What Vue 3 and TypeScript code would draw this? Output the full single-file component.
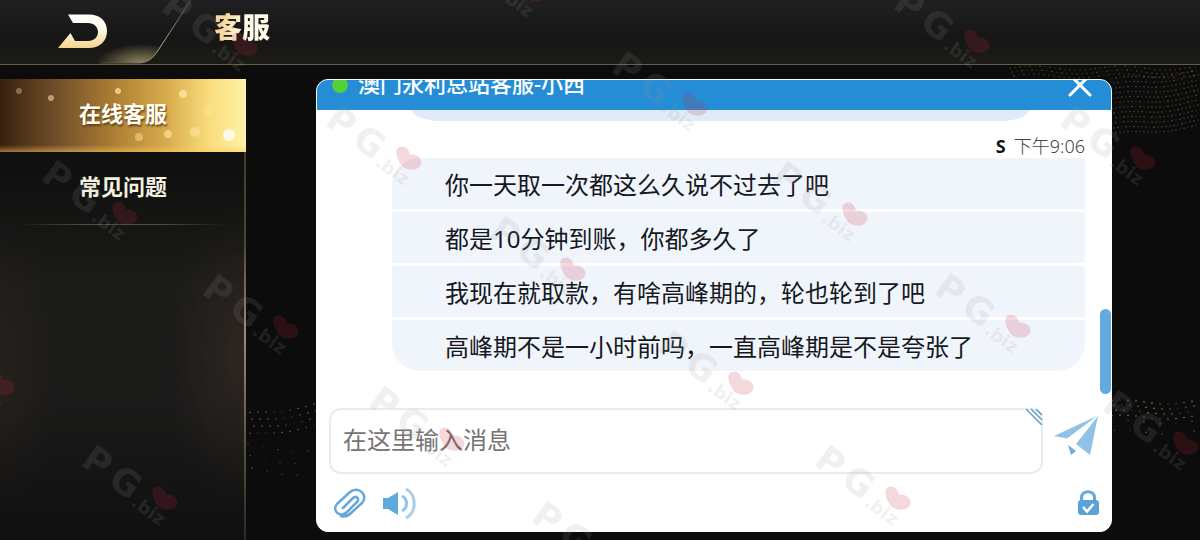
<script setup lang="ts">
import { ref } from 'vue'

interface Point { x: number; y: number }
interface Dot extends Point { r: number; o: number; warm: boolean }

const tabs = ['在线客服', '常见问题']
const active = ref(0)
const draft = ref('')

const messages = [
  '你一天取一次都这么久说不过去了吧',
  '都是10分钟到账，你都多久了',
  '我现在就取款，有啥高峰期的，轮也轮到了吧',
  '高峰期不是一小时前吗，一直高峰期是不是夸张了',
]

const marks: Point[] = [
  { x: 177, y: 8 }, { x: 465, y: -46 }, { x: 627, y: 68 }, { x: 909, y: 5 },
  { x: 57, y: 177 }, { x: 341, y: 122 }, { x: 1075, y: 122 }, { x: 787, y: 178 },
  { x: 218, y: 291 }, { x: 505, y: 233 }, { x: 950, y: 290 }, { x: 673, y: 347 },
  { x: -66, y: 347 }, { x: 97, y: 462 }, { x: 384, y: 403 }, { x: 1118, y: 407 },
  { x: 830, y: 462 }, { x: 547, y: 518 },
]

const sparkles: Dot[] = [
  { x: 19, y: 12, r: 3, o: 0.35, warm: true }, { x: 51, y: 19, r: 3, o: 0.55, warm: true },
  { x: 118, y: 12, r: 3, o: 0.7, warm: true }, { x: 183, y: 15, r: 4, o: 0.75, warm: true },
  { x: 208, y: 31, r: 5, o: 0.35, warm: true }, { x: 139, y: 58, r: 4, o: 0.45, warm: true },
  { x: 168, y: 55, r: 4, o: 0.6, warm: true }, { x: 195, y: 53, r: 5, o: 0.5, warm: true },
  { x: 229, y: 56, r: 6, o: 0.75, warm: false },
]

function wave(x0: number, x1: number, y0: number, rows: number, gap: number, step: number, slope: number, strength: number): Dot[] {
  const out: Dot[] = []
  for (let r = 0; r < rows; r++) {
    for (let x = x0 + (r % 3) * 2; x < x1; x += step) {
      const n = Math.abs(Math.sin(x * 12.9 + r * 78.2))
      out.push({ x, y: y0 + r * gap + (x - x0) * slope + Math.sin(x / 14) * 2, r: 0.8, o: strength * (0.3 + n * 0.7), warm: n > 0.6 })
    }
  }
  return out
}

const dust: Dot[] = [
  ...wave(1010, 1200, 68, 3, 4, 5, 0, 0.4),
  ...wave(1112, 1200, 80, 12, 5, 4, -0.1, 0.45),
  ...wave(250, 320, 414, 4, 7, 8, -0.14, 0.6),
  ...wave(248, 310, 445, 3, 12, 15, 0.1, 0.4),
  ...wave(1112, 1196, 402, 4, 5, 8, 0, 0.8),
  ...wave(1112, 1196, 422, 2, 10, 16, 0, 0.5),
]
</script>

<template>
  <div class="page">
    <svg class="dust" width="1200" height="540" viewBox="0 0 1200 540" aria-hidden="true">
      <circle v-for="(d, i) in dust" :key="i" :cx="d.x" :cy="d.y" :r="d.r" :opacity="d.o" :fill="d.warm ? '#c9a050' : '#a09a88'" />
    </svg>

    <header class="topbar">
      <button class="back" type="button" aria-label="返回">
        <svg width="200" height="64" viewBox="0 0 200 64">
          <defs>
            <linearGradient id="arrowFill" x1="0" y1="0" x2="0" y2="1">
              <stop offset="0" stop-color="#ffffff" />
              <stop offset="0.45" stop-color="#fff9e8" />
              <stop offset="1" stop-color="#f4d38a" />
            </linearGradient>
            <radialGradient id="tabGlow" cx="0.5" cy="0.5" r="0.5">
              <stop offset="0" stop-color="#b3a574" stop-opacity="0.8" />
              <stop offset="1" stop-color="#b3a574" stop-opacity="0" />
            </radialGradient>
            <linearGradient id="tabEdge" x1="0" y1="1" x2="1" y2="0">
              <stop offset="0" stop-color="#4b4838" />
              <stop offset="0.5" stop-color="#b5ab8a" />
              <stop offset="1" stop-color="#454238" />
            </linearGradient>
            <clipPath id="tabClip"><path d="M0 0H191L157 52Q151 62 140 63H0Z" /></clipPath>
          </defs>
          <g clip-path="url(#tabClip)"><ellipse cx="142" cy="64" rx="46" ry="20" fill="url(#tabGlow)" /></g>
          <path d="M191 0L157 52Q151 62 140 63H100" fill="none" stroke="url(#tabEdge)" />
          <path d="M68 14.5H89C100 14.5 107 21 107 31S100 48 89 48H58L70.5 33L75 41H88C94 41 98 37 98 32S94 23 88 23H73Z" fill="url(#arrowFill)" />
        </svg>
      </button>
      <h1 class="title">客服</h1>
    </header>

    <div class="body">
      <nav class="sidebar">
        <button v-for="(t, i) in tabs" :key="t" type="button" class="tab" :class="{ on: i === active }" @click="active = i">
          <svg v-if="i === active" class="sparkle" width="246" height="73" viewBox="0 0 246 73" aria-hidden="true">
            <circle v-for="(d, k) in sparkles" :key="k" :cx="d.x" :cy="d.y" :r="d.r" :opacity="d.o" :fill="d.warm ? '#ffe9a8' : '#ffffff'" />
          </svg>
          <span>{{ t }}</span>
        </button>
      </nav>

      <main class="chat">
        <div class="chat-head">
          <span class="status"></span>
          <h2>澳门永利总站客服-小西</h2>
          <button class="close" type="button" aria-label="关闭">
            <svg width="26" height="26" viewBox="0 0 26 26"><path d="M3 3L23 23M23 3L3 23" fill="none" stroke="#fff" stroke-width="3" stroke-linecap="round" /></svg>
          </button>
        </div>

        <section class="log">
          <div class="previous"></div>
          <p class="meta"><b>S</b><time>下午9:06</time></p>
          <div class="bubble">
            <p v-for="m in messages" :key="m">{{ m }}</p>
          </div>
          <div class="thumb"></div>
        </section>

        <form class="composer" @submit.prevent>
          <div class="field">
            <textarea v-model="draft" rows="1" aria-label="消息" placeholder="在这里输入消息"></textarea>
            <svg class="grip" width="17" height="17" viewBox="0 0 17 17" aria-hidden="true"><path d="M0 1L16 17M5 1L16 12M10 1L16 7" stroke="#5c9fd0" stroke-width="1.5" fill="none" /></svg>
          </div>
          <button class="send" type="submit" aria-label="发送">
            <svg width="44" height="42" viewBox="0 0 44 42">
              <path d="M43 2L0 22L13 24.5Z" fill="#8fc2e6" />
              <path d="M44 2L36 41L22 30Z" fill="#8fc2e6" />
              <path d="M14 31L22 37L17 41Z" fill="#6caedd" />
            </svg>
          </button>
        </form>

        <div class="tools">
          <button type="button" aria-label="附件">
            <svg width="34" height="32" viewBox="0 0 34 32"><path d="M10 21L20 11C23 8 27 12 24 15L14 25C8 31 -2 24 4 17L17 5C25 -2 36 8 29 16L18 26C15 29 11 30 8 29" fill="none" stroke="#66a8d9" stroke-width="2.5" stroke-linecap="round" stroke-linejoin="round" /></svg>
          </button>
          <button type="button" aria-label="声音">
            <svg width="34" height="32" viewBox="0 0 34 32">
              <path d="M1 11H6L16 5V28L6 22H1Z" fill="#5faadc" />
              <path d="M20 9C26 12 26 21 20 24" fill="none" stroke="#8fc4e8" stroke-width="3" />
              <path d="M24 2C35 8 35 25 24 31" fill="none" stroke="#a9cdea" stroke-width="3" />
            </svg>
          </button>
          <button class="lock" type="button" aria-label="安全">
            <svg width="22" height="26" viewBox="0 0 22 26">
              <path d="M4.5 11V8C4.5 -0.5 17.5 -0.5 17.5 8V11" fill="none" stroke="#66a6d8" stroke-width="3" />
              <rect x="1" y="10" width="21" height="15" rx="3" fill="#5ba2d8" />
              <path d="M6 17L10 21.5L16.5 14" fill="none" stroke="#fff" stroke-width="2.5" />
            </svg>
          </button>
        </div>
      </main>
    </div>

    <svg class="marks" width="1200" height="540" viewBox="0 0 1200 540" aria-hidden="true">
      <g v-for="(m, i) in marks" :key="i" :transform="`translate(${m.x} ${m.y}) rotate(36)`">
        <g fill="#999999" opacity="0.14">
          <text class="mark-big" x="-13" y="12">P</text>
          <text class="mark-big" x="20" y="12">G</text>
          <text class="mark-small" x="52" y="15">.biz</text>
        </g>
        <path d="M76 0C66 -3 59 -9 62 -14C65 -19 71 -18 75 -14C80 -20 91 -18 90 -10C89 -4 82 0 76 0Z" fill="#c8283c" opacity="0.18" />
      </g>
    </svg>
  </div>
</template>

<style>
html, body { background: #0c0c0c; }
</style>

<style scoped>
.page {
  position: relative;
  display: flex;
  flex-direction: column;
  min-height: 100vh;
  overflow: hidden;
  background: #0c0c0c;
  font-family: "Noto Sans", "Noto Sans CJK SC", sans-serif;
}
.page * { box-sizing: border-box; }
h1, h2, p { margin: 0; }
button { padding: 0; border: 0; background: none; font: inherit; color: inherit; cursor: pointer; }
svg { display: block; }
.dust, .marks { position: absolute; top: 0; left: 0; pointer-events: none; }
.mark-big { font: bold 36px "DejaVu Sans", sans-serif; }
.mark-small { font: bold 18px "DejaVu Sans", sans-serif; }

.topbar {
  position: relative;
  display: flex;
  height: 65px;
  border-bottom: 1px solid #625e4c;
  background: linear-gradient(#202020, #161616 60%, #1c1b16);
}
.title {
  margin-left: 14px;
  font-size: 28px;
  line-height: 54px;
  font-weight: 900;
  background: linear-gradient(100deg, #f7d9a0 15px, #fffbe8 34px, #fff8e4);
  -webkit-background-clip: text;
  background-clip: text;
  color: transparent;
}

.body { flex: 1; display: flex; padding-top: 14px; }
.sidebar {
  position: relative;
  width: 246px;
  border-right: 2px solid;
  border-image: linear-gradient(#3a3628, #4a4534 35%, #9c8c74 55%, #56523c 80%, #2a2820) 1;
  background:
    radial-gradient(ellipse 80px 150px at 100% 60%, rgba(110, 75, 60, 0.24), transparent),
    radial-gradient(ellipse 60px 150px at 0 62%, rgba(100, 65, 45, 0.16), transparent),
    linear-gradient(#101010 20%, #1b1b19 45%, #1a1a19 70%, #101010);
}
.tab {
  position: relative;
  display: block;
  width: 246px;
  height: 73px;
  padding-bottom: 4px;
  font-size: 22px;
  line-height: 69px;
  font-weight: 700;
  color: #f4f0e0;
}
.tab span { position: relative; }
.tab:not(.on)::after {
  content: "";
  position: absolute;
  left: 20px;
  right: 20px;
  bottom: 0;
  height: 1px;
  background: linear-gradient(90deg, transparent, #514d3e 30%, #514d3e 70%, transparent);
}
.tab.on {
  color: #fffdf4;
  text-shadow: 1px 2px 2px rgba(90, 50, 10, 0.8);
  background:
    linear-gradient(transparent 66px, rgba(255, 200, 90, 0.5)),
    linear-gradient(90deg, #38200f, #74502a 24%, #b08235 48%, #d8ac4e 68%, #f9dc7c 85%, #fff2a6);
}
.sparkle { position: absolute; left: 0; top: 0; }

.chat {
  position: relative;
  flex: 1;
  display: flex;
  flex-direction: column;
  margin: 0 88px 8px 70px;
  border: 1px solid #fff;
  border-radius: 12px;
  overflow: hidden;
  background: #fff;
}
.chat-head {
  display: flex;
  align-items: center;
  height: 30px;
  padding: 0 18px 0 15px;
  overflow: hidden;
  background: #258dd6;
  color: #fff;
}
.chat-head > * { flex: none; margin-bottom: 20px; }
.chat-head h2 { margin: 0 0 24px 10px; font-size: 22px; line-height: 30px; font-weight: 500; }
.status { width: 16px; height: 16px; border-radius: 50%; background: #55cf3c; }
.close { margin-left: auto; }

.log { position: relative; flex: 1; padding: 0 26px 34px 75px; }
.previous { height: 11px; margin: 0 56px 0 20px; border-radius: 0 0 30px 30px / 0 0 11px 11px; background: #dfebf6; }
.meta {
  display: flex;
  justify-content: flex-end;
  gap: 8px;
  padding-top: 13px;
  font-size: 18px;
  line-height: 24px;
  color: #444;
}
.meta b { color: #111; }
.meta time { font-weight: 300; }
.bubble { display: grid; gap: 3px; border-radius: 28px 0 28px 28px; overflow: hidden; }
.bubble p { padding: 2px 53px 0; font-size: 24px; line-height: 49px; color: #15181c; background: #f0f5fc; }
.thumb { position: absolute; right: 0; bottom: 14px; width: 11px; height: 85px; border-radius: 6px; background: #63aade; }

.composer { display: flex; align-items: center; gap: 11px; padding: 0 13px 0 12px; }
.field { position: relative; flex: 1; }
textarea {
  display: block;
  width: 100%;
  height: 66px;
  padding: 13px 12px;
  border: 2px solid #ebebeb;
  border-radius: 12px;
  outline: 0;
  resize: none;
  overflow: hidden;
  background: transparent;
  font: 24px/34px "Noto Sans", "Noto Sans CJK SC", sans-serif;
}
textarea::placeholder { color: #757575; opacity: 1; }
.grip { position: absolute; right: 0; top: 0; }
.send { margin-bottom: 12px; }
.tools { display: flex; align-items: center; gap: 15px; height: 57px; padding: 0 12px 0 16px; }
.lock { margin-left: auto; }
</style>
